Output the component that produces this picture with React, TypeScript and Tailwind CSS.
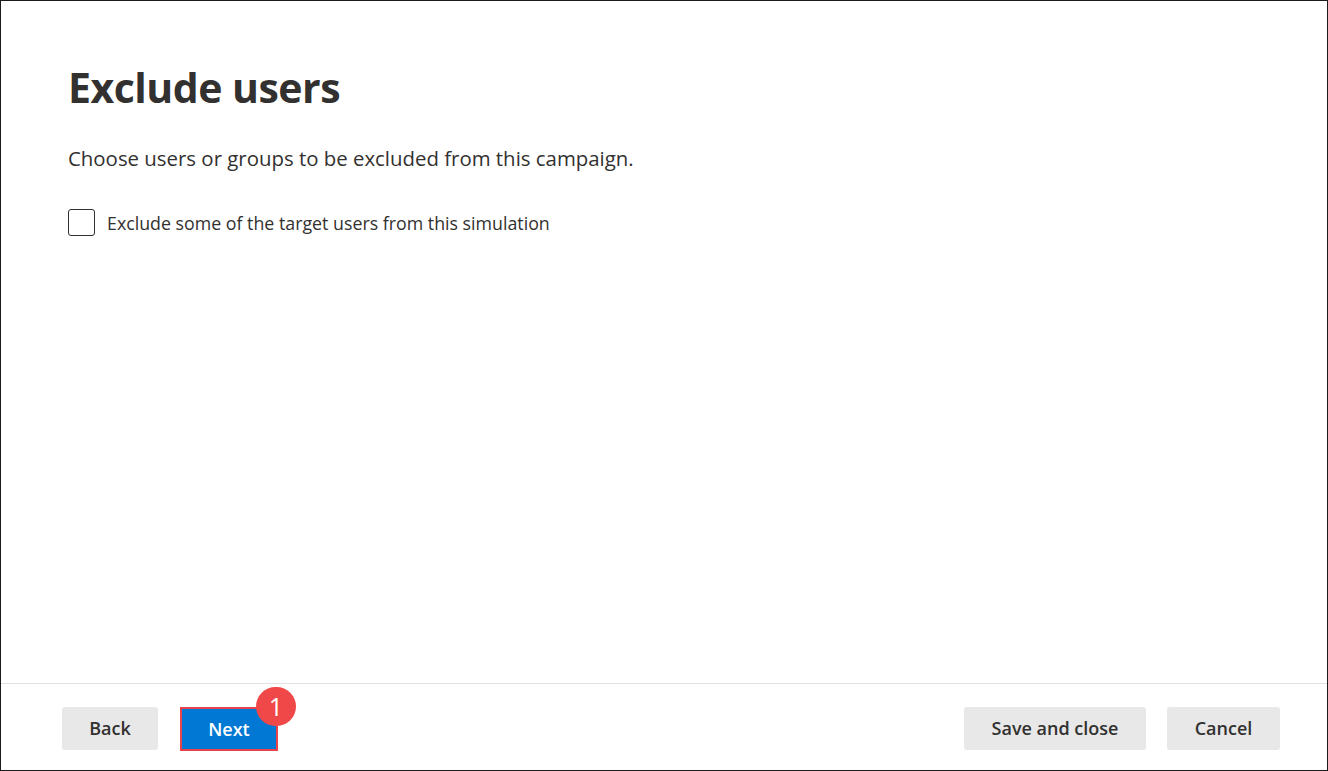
import React from "react";

export default function App() {
  return (
    <div className="w-[1328px] h-[771px] bg-white border border-[#1b1b1b] flex flex-col font-['Open_Sans',sans-serif] text-[#323130]">
      {/* Body */}
      <div className="flex-1 pl-[67px] pt-[58px]">
        <h1 className="text-[41px] leading-[56px] font-bold tracking-[-0.5px]">Exclude users</h1>
        <p className="mt-[29px] text-[20.4px] leading-[28px]">Choose users or groups to be excluded from this campaign.</p>
        <label className="mt-[37px] flex items-center gap-[12px] cursor-pointer">
          <span className="w-[27px] h-[27px] rounded-[3px] border-[1.5px] border-[#323130] bg-white shrink-0" />
          <span className="text-[17.8px] leading-[24px]">Exclude some of the target users from this simulation</span>
        </label>
      </div>

      {/* Footer */}
      <div className="h-[87px] border-t border-[#e1e1e1] pl-[61px] pr-[47px] pt-[23px] flex items-start justify-between">
        <div className="flex items-start gap-[22px]">
          <button className="h-[43px] w-[96px] rounded-[3px] bg-[#e8e8e8] text-[18px] font-semibold text-[#323130]">Back</button>
          <div className="relative">
            <button className="h-[44px] w-[98px] border-2 border-[#e8434a] bg-[#0078d4] text-[18px] font-semibold text-white">Next</button>
            <span className="absolute left-[76px] top-[-20px] w-[40px] h-[39px] rounded-full bg-[#f04848] text-white text-[25px] leading-none flex items-center justify-center">1</span>
          </div>
        </div>
        <div className="flex items-start gap-[21px]">
          <button className="h-[43px] w-[182px] rounded-[3px] bg-[#e8e8e8] text-[18px] font-semibold text-[#323130]">Save and close</button>
          <button className="h-[43px] w-[113px] rounded-[3px] bg-[#e8e8e8] text-[18px] font-semibold text-[#323130]">Cancel</button>
        </div>
      </div>
    </div>
  );
}
